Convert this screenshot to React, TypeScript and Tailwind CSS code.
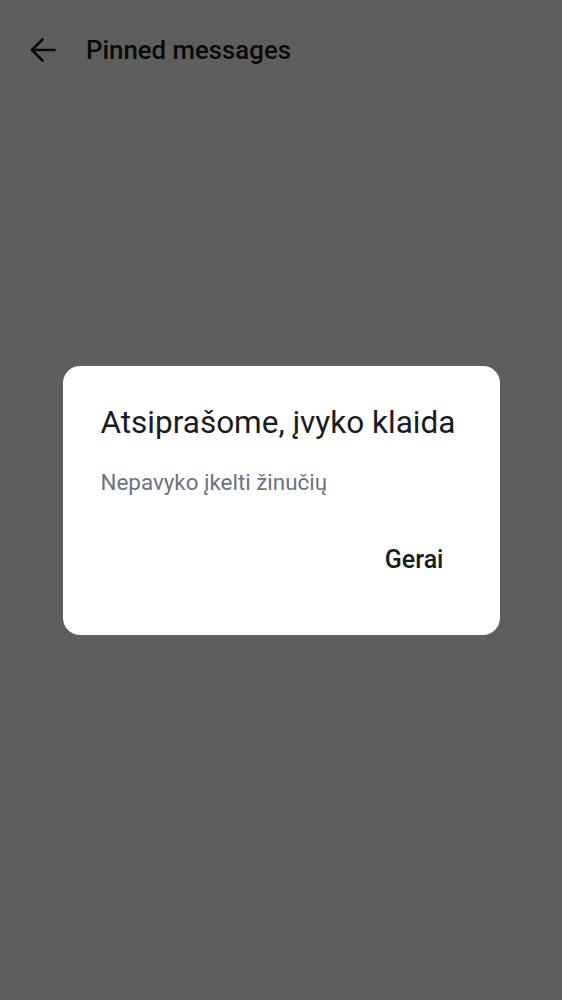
export default function App() {
  return (
    <div className="relative h-[1000px] w-full overflow-hidden bg-white" style={{ fontFamily: 'Roboto, "Noto Sans", sans-serif' }}>
      {/* page header */}
      <div className="flex h-[99px] items-center gap-[30px] px-[30px]">
        <svg width="26" height="26" viewBox="0 0 26 26" fill="none" stroke="#1d1d1d" strokeWidth="2.6" strokeLinecap="round" strokeLinejoin="round">
          <path d="M24.5 13H2" />
          <path d="M12.5 2.5 2 13l10.5 10.5" />
        </svg>
        <h1 className="text-[25.8px] font-medium leading-[32px] text-[#1d1d1d]">Pinned messages</h1>
      </div>

      {/* scrim + dialog */}
      <div className="absolute inset-0 flex items-center justify-center bg-black/[0.63]">
        <div className="w-[437px] rounded-[17px] bg-white px-[38px] pt-[37px] pb-[59px]">
          <h2 className="whitespace-nowrap text-[31.5px] leading-[40px] text-[#1a1c21]">Atsiprašome, įvyko klaida</h2>
          <p className="mt-[23px] text-[22.4px] leading-[32px] text-[#6b7280]">Nepavyko įkelti žinučių</p>
          <div className="mt-[46px] flex justify-end pr-[18px]">
            <button className="text-[25px] font-medium leading-[32px] text-[#1a1c21]">Gerai</button>
          </div>
        </div>
      </div>
    </div>
  );
}
